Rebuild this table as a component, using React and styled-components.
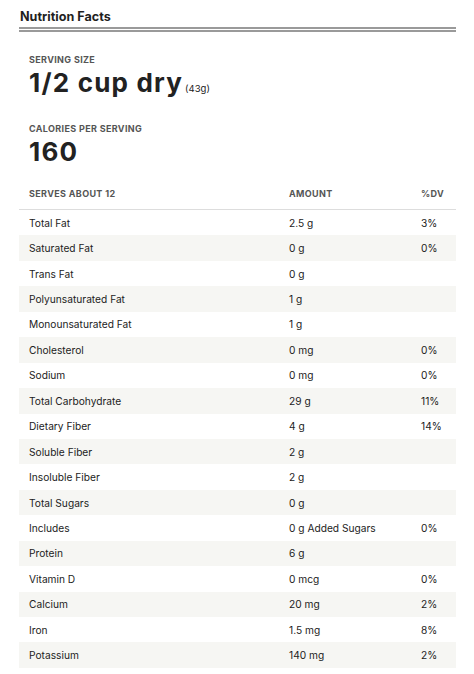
import React from "react";
import styled, { createGlobalStyle } from "styled-components";

const Global = createGlobalStyle`
  html, body { margin: 0; padding: 0; background: #fff; }
  body { font-family: Inter, "Liberation Sans", sans-serif; color: #222; }
`;

const Page = styled.div`
  padding: 0 18px 0 19px;
`;

const Title = styled.h1`
  margin: 0;
  padding: 10px 0 4px 1px;
  font-size: 12.6px;
  line-height: 13px;
  font-weight: 700;
  color: #1f1f1f;
  border-bottom: 5px double #9a9a9a;
`;

const Section = styled.section`
  padding: ${(p) => p.$pt}px 10px 0;
`;

const Label = styled.div`
  font-size: 9px;
  line-height: 12px;
  font-weight: 700;
  letter-spacing: 0.35px;
  text-transform: uppercase;
  color: #555;
`;

const Big = styled.div`
  font-size: 26px;
  line-height: 28px;
  font-weight: 700;
  letter-spacing: 1.2px;
  color: #222;
  margin-top: ${(p) => p.$mt || 0}px;
`;

const Small = styled.span`
  font-size: 9.5px;
  font-weight: 400;
  letter-spacing: 0;
  margin-left: 2px;
`;

const Table = styled.div`
  margin-top: ${(p) => p.$mt}px;
  display: grid;
  grid-template-columns: 260px 132px 1fr;
`;

const HeadRow = styled.div`
  display: contents;
`;

const HeadCell = styled.div`
  padding: 0 10px 9px;
  font-size: 9px;
  line-height: 12px;
  font-weight: 700;
  letter-spacing: 0.35px;
  text-transform: uppercase;
  color: #555;
  border-bottom: 1px solid #ddd;
`;

const Row = styled.div`
  display: contents;
  & > div {
    background: ${(p) => (p.$striped ? "#f6f6f3" : "#fff")};
  }
`;

const Cell = styled.div`
  height: 25.45px;
  display: flex;
  align-items: center;
  padding: 0 10px;
  font-size: 10.2px;
  color: #222;
  white-space: nowrap;
`;

const rows = [
  ["Total Fat", "2.5 g", "3%"],
  ["Saturated Fat", "0 g", "0%"],
  ["Trans Fat", "0 g", ""],
  ["Polyunsaturated Fat", "1 g", ""],
  ["Monounsaturated Fat", "1 g", ""],
  ["Cholesterol", "0 mg", "0%"],
  ["Sodium", "0 mg", "0%"],
  ["Total Carbohydrate", "29 g", "11%"],
  ["Dietary Fiber", "4 g", "14%"],
  ["Soluble Fiber", "2 g", ""],
  ["Insoluble Fiber", "2 g", ""],
  ["Total Sugars", "0 g", ""],
  ["Includes", "0 g Added Sugars", "0%"],
  ["Protein", "6 g", ""],
  ["Vitamin D", "0 mcg", "0%"],
  ["Calcium", "20 mg", "2%"],
  ["Iron", "1.5 mg", "8%"],
  ["Potassium", "140 mg", "2%"],
];

export default function App() {
  return (
    <Page>
      <Global />
      <Title>Nutrition Facts</Title>
      <Section $pt={22}>
        <Label>Serving Size</Label>
        <Big $mt={3}>
          1/2 cup dry<Small>(43g)</Small>
        </Big>
      </Section>
      <Section $pt={20}>
        <Label>Calories per serving</Label>
        <Big $mt={3}>160</Big>
      </Section>
      <Table $mt={22}>
        <HeadRow>
          <HeadCell>Serves about 12</HeadCell>
          <HeadCell>Amount</HeadCell>
          <HeadCell>%DV</HeadCell>
        </HeadRow>
        {rows.map((r, i) => (
          <Row key={r[0]} $striped={i % 2 === 1}>
            <Cell>{r[0]}</Cell>
            <Cell>{r[1]}</Cell>
            <Cell>{r[2]}</Cell>
          </Row>
        ))}
      </Table>
    </Page>
  );
}
